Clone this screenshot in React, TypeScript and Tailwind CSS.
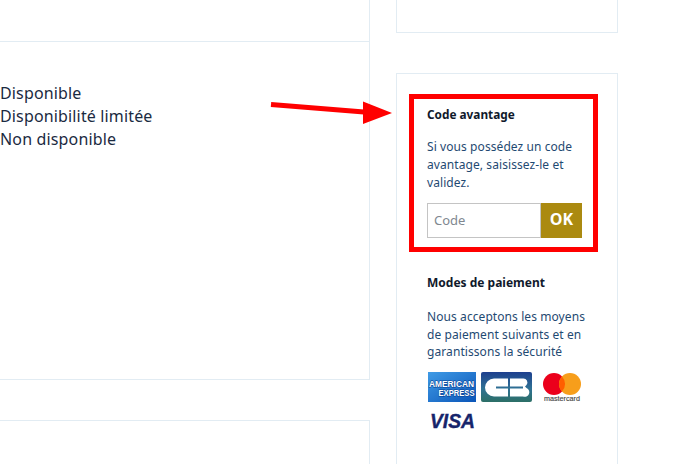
const font = { fontFamily: '"Noto Sans", "Open Sans", sans-serif' };

function Amex() {
  return (
    <svg width="48" height="30" viewBox="0 0 48 30">
      <defs>
        <linearGradient id="amexbg" x1="0" y1="0" x2="1" y2="1">
          <stop offset="0" stopColor="#3f9be6" />
          <stop offset="1" stopColor="#0b55b8" />
        </linearGradient>
      </defs>
      <rect width="48" height="30" fill="url(#amexbg)" />
      <text x="1" y="14.500" fontFamily="Liberation Sans" fontWeight="700" fontSize="9" fill="#fff" stroke="#083f92" strokeWidth="0.9" paintOrder="stroke" textLength="45" lengthAdjust="spacingAndGlyphs">AMERICAN</text>
      <text x="10.500" y="23.500" fontFamily="Liberation Sans" fontWeight="700" fontSize="9" fill="#fff" stroke="#083f92" strokeWidth="0.9" paintOrder="stroke" textLength="36" lengthAdjust="spacingAndGlyphs">EXPRESS</text>
    </svg>
  );
}

function CarteBleue() {
  return (
    <svg width="51" height="30" viewBox="0 0 51 30">
      <defs>
        <linearGradient id="cbbg" x1="0" y1="0" x2="0" y2="1">
          <stop offset="0" stopColor="#1d3f8e" />
          <stop offset="0.55" stopColor="#2f7194" />
          <stop offset="1" stopColor="#2c6f66" />
        </linearGradient>
      </defs>
      <rect width="51" height="30" rx="2" fill="url(#cbbg)" />
      <path d="M27 6.500h-14a9 9 0 0 0 0 18h14v-8h-12v-2h12z" fill="#fff" />
      <path d="M29 6.500h13a4 4 0 0 1 3.500 6.500l-1.500 1.500l1.500 1.500a4.500 4.500 0 0 1 -3.500 8.500h-13v-8h13v-2h-13z" fill="#fff" />
    </svg>
  );
}

function Mastercard() {
  return (
    <svg width="40" height="30" viewBox="0 0 40 30">
      <circle cx="12" cy="12" r="11" fill="#eb001b" />
      <circle cx="28" cy="12" r="11" fill="#f79e1b" />
      <path d="M20 4.400a11 11 0 0 1 0 15.200a11 11 0 0 1 0-15.200z" fill="#ff5f00" />
      <text x="2" y="29" fontFamily="Liberation Sans" fontSize="6.500" fontWeight="400" stroke="#555" strokeWidth="0.15" fill="#444" textLength="36" lengthAdjust="spacingAndGlyphs">mastercard</text>
    </svg>
  );
}

function Visa() {
  return (
    <svg width="50" height="24" viewBox="0 0 50 24">
      <text x="2" y="17" fontFamily="Liberation Sans" fontStyle="italic" fontWeight="700" fontSize="21" fill="#16246b" stroke="#16246b" strokeWidth="0.4" textLength="45" lengthAdjust="spacingAndGlyphs">VISA</text>
    </svg>
  );
}

export default function App() {
  return (
    <div className="relative flex w-[687px] h-[464px] overflow-hidden bg-white text-[#1b2a41]" style={font}>
      {/* main column */}
      <div className="w-[370px] shrink-0 flex flex-col">
        <div className="h-[42px] border-b border-r border-[#e2ecf3]" />
        <div className="h-[338px] border-b border-r border-[#e2ecf3] pt-[40px] text-[16px] leading-[23px] tracking-[0.15px]">
          <div>Disponible</div>
          <div>Disponibilité limitée</div>
          <div>Non disponible</div>
        </div>
        <div className="mt-[40px] flex-1 border-t border-r border-[#e2ecf3]" />
      </div>

      {/* sidebar */}
      <div className="ml-[26px] w-[222px] shrink-0 flex flex-col">
        <div className="h-[33px] border-x border-b border-[#e2ecf3]" />
        <div className="mt-[40px] flex-1 border-x border-t border-[#e2ecf3] pt-[20px] pl-[12px]">
          <div className="w-[189px] h-[158px] border-[5px] border-[#ff0000] pl-[13px] pr-[12px] pt-[5px]">
            <div className="text-[11.8px] leading-[20px] font-bold text-[#10192b]">Code avantage</div>
            <p className="mt-[14px] text-[12px] leading-[18px] tracking-[0.08px] text-[#1f4a72]">
              Si vous possédez un code avantage, saisissez-le et validez.
            </p>
            <div className="mt-[11px] flex h-[35px] w-[155px]">
              <div className="flex-1 border border-[#c4c4c4] pl-[6px] text-[13px] leading-[33px] text-[#808890]">Code</div>
              <div className="w-[41px] bg-[#ab8a10] text-center text-[16px] leading-[33px] font-bold text-white" style={{ fontFamily: '"Open Sans", sans-serif' }}>OK</div>
            </div>
          </div>

          <div className="pl-[18px] pr-[16px] pt-[21px]">
            <div className="text-[12px] leading-[20px] font-bold text-[#10192b]">Modes de paiement</div>
            <p className="mt-[15px] w-[165px] text-[12px] leading-[17.5px] tracking-[0.08px] text-[#1f4a72]">
              Nous acceptons les moyens de paiement suivants et en garantissons la sécurité
            </p>
            <div className="mt-[11.5px] ml-[1px] flex flex-wrap items-start gap-x-[5px] w-[170px]">
              <Amex />
              <CarteBleue />
              <div className="ml-[5px]"><Mastercard /></div>
              <div className="mt-[9px] basis-full"><Visa /></div>
            </div>
          </div>
        </div>
      </div>

      {/* annotation arrow */}
      <svg className="absolute left-[268px] top-[98px]" width="126" height="30" viewBox="0 0 126 30">
        <path d="M3 6.500L96 14" stroke="#ff0000" strokeWidth="5" fill="none" />
        <path d="M95 3.500L124 15L95 26z" fill="#ff0000" />
      </svg>
    </div>
  );
}
